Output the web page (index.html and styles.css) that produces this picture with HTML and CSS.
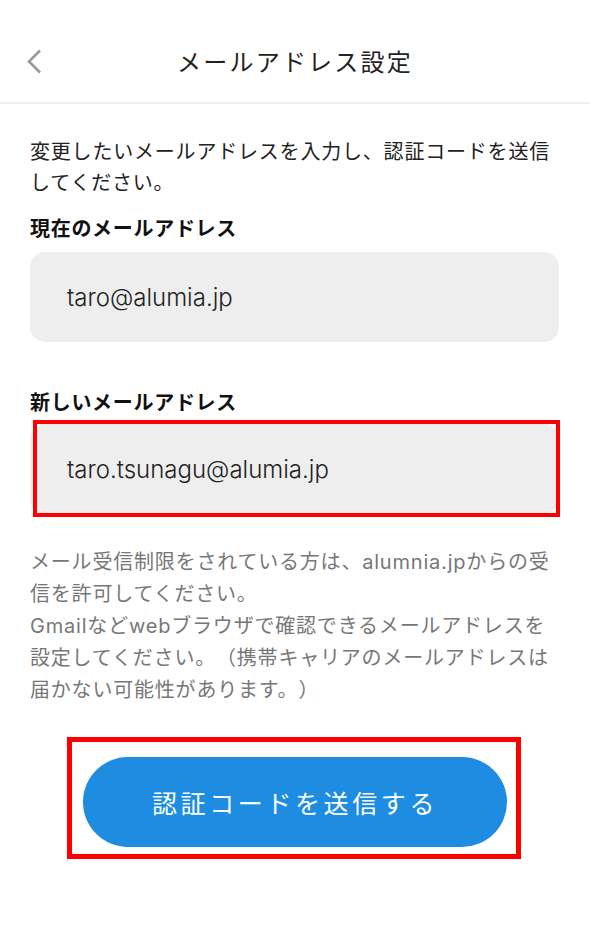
FILE: index.html
```html
<!DOCTYPE html>
<html lang="ja">
<head>
  <meta charset="UTF-8">
  <title>メールアドレス設定</title>
  <meta name="viewport" content="width=device-width, initial-scale=1.0">
  <link rel="stylesheet" href="styles.css">
</head>
<body>
  <header class="topbar">
    <a class="back" href="#" aria-label="戻る">
      <svg width="16" height="25" viewBox="0 0 16 25"><path d="M14 1.5 L3 12.5 L14 23.5" fill="none" stroke="#9a9a9a" stroke-width="2.6"/></svg>
    </a>
    <h1>メールアドレス設定</h1>
  </header>

  <main class="content">
    <p class="intro">変更したいメールアドレスを入力し、認証コードを送信してください。</p>

    <label class="label">現在のメールアドレス</label>
    <div class="field">taro@alumia.jp</div>

    <label class="label label-new" for="newEmail">新しいメールアドレス</label>
    <div class="field marked">
      <input id="newEmail" type="email" value="taro.tsunagu@alumia.jp">
    </div>

    <p class="note">メール受信制限をされている方は、alumnia.jpからの受信を許可してください。<br>Gmailなどwebブラウザで確認できるメールアドレスを設定してください。（携帯キャリアのメールアドレスは届かない可能性があります。）</p>

    <div class="submit-wrap">
      <button type="submit">認証コードを送信する</button>
    </div>
  </main>
</body>
</html>
```

FILE: styles.css
```css
body {
  margin: 0;
  background: white;
  color: #222;
  font-family: Inter, "Noto Sans CJK JP", sans-serif;
  text-spacing-trim: space-all;
}
.topbar {
  position: relative;
  height: 102px;
  border-bottom: 2px solid #f0f0f0;
  display: flex;
  align-items: center;
  justify-content: center;
}
.back {
  position: absolute;
  left: 26px;
  top: 49px;
  display: block;
  line-height: 0;
}
.topbar h1 {
  margin: 0;
  padding-top: 19px;
  font-size: 24px;
  font-weight: normal;
  letter-spacing: 2.2px;
  color: #222;
}
.content {
  padding: 33px 31px 40px 30px;
}
.intro {
  margin: 0;
  font-size: 20px;
  line-height: 31px;
  letter-spacing: 0.8px;
  color: #222;
}
.label {
  display: block;
  margin-top: 16px;
  font-size: 20px;
  line-height: 28px;
  font-weight: bold;
  letter-spacing: 0.7px;
  color: #111;
}
.field {
  margin-top: 9px;
  height: 90px;
  box-sizing: border-box;
  padding: 0 37px;
  display: flex;
  align-items: center;
  background: #eeeeee;
  border-radius: 15px;
  font-size: 24px;
  font-weight: 300;
  color: #222;
}
.label-new {
  margin-top: 47px;
}
.marked {
  position: relative;
  margin-top: 7px;
}
.marked::after {
  content: "";
  position: absolute;
  left: 3px;
  right: -1px;
  top: -4px;
  bottom: -3px;
  border: 4px solid #ff0000;
  pointer-events: none;
}
.field input {
  width: 100%;
  border: none;
  background: transparent;
  padding: 0;
  font: inherit;
  color: inherit;
  outline: none;
}
.note {
  margin: 32px 0 0;
  font-size: 20px;
  line-height: 32px;
  letter-spacing: 0.8px;
  color: #777;
}
.submit-wrap {
  margin: 31px auto 0 37px;
  padding: 15px 9px 7px 11px;
  border: 5px solid #ff0000;
  box-sizing: content-box;
  width: 424px;
}
button {
  display: block;
  width: 424px;
  height: 90px;
  background: #1e8ce0;
  color: white;
  border: none;
  border-radius: 45px;
  font-family: inherit;
  font-size: 25px;
  letter-spacing: 3.6px;
  cursor: pointer;
}
```
